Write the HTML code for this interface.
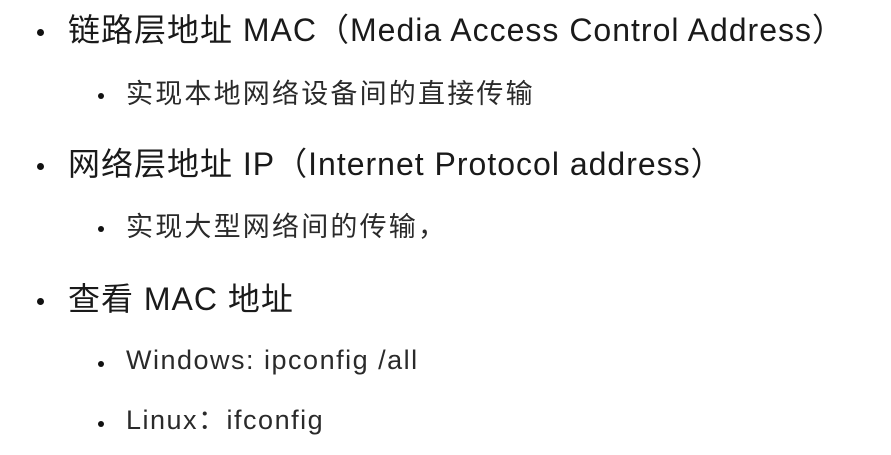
<!DOCTYPE html>
<html><head><meta charset="utf-8"><style>
body{margin:0;width:891px;height:455px;background:#fff;position:relative;overflow:hidden;font-family:"Liberation Sans","Noto Sans CJK SC",sans-serif;color:#1a1a1a}
.l{position:absolute;white-space:nowrap;line-height:1}
.a{left:68px;font-size:32px;letter-spacing:1px}
.b{left:126px;font-size:27px;letter-spacing:1.5px;color:#2a2a2a}
.c{letter-spacing:2.2px}
.d{position:absolute;border-radius:50%;background:#111}
.d1{left:37px;width:7px;height:7px}
.d2{left:98px;width:6px;height:6px}
</style></head><body>
<div class="d d1" style="top:29px"></div><div class="l a" style="top:14px">链路层地址 MAC（Media Access Control Address）</div>
<div class="d d2" style="top:93px"></div><div class="l b c" style="top:81px">实现本地网络设备间的直接传输</div>
<div class="d d1" style="top:163px"></div><div class="l a" style="top:148px">网络层地址 IP（Internet Protocol address）</div>
<div class="d d2" style="top:226px"></div><div class="l b c" style="top:214px">实现大型网络间的传输，</div>
<div class="d d1" style="top:298px"></div><div class="l a" style="top:283px">查看 MAC 地址</div>
<div class="d d2" style="top:361px"></div><div class="l b" style="top:347px">Windows: ipconfig /all</div>
<div class="d d2" style="top:421px"></div><div class="l b" style="top:407px">Linux：ifconfig</div>
</body></html>
